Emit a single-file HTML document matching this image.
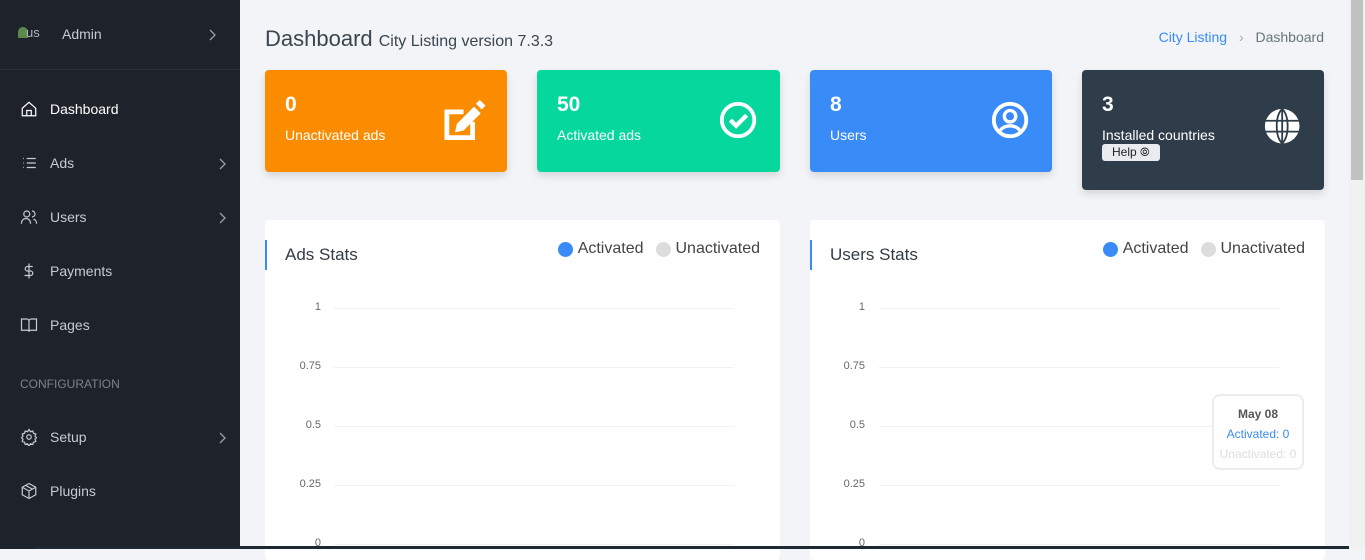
<!DOCTYPE html>
<html><head><meta charset="utf-8"><style>
*{box-sizing:border-box;margin:0;padding:0}
body{width:1365px;height:549px;overflow:hidden;background:#f2f4f8;font-family:"Liberation Sans",sans-serif;position:relative}
.sb{position:absolute;left:0;top:0;width:240px;height:549px;background:#1e222a;color:#c6cbd2}
.sb .top{height:70px;border-bottom:1px solid #2c323c;position:relative}
.item{position:absolute;left:20px;font-size:14px;display:flex;align-items:center}
.item svg{width:18px;height:18px;margin-right:12px;stroke:#c6cbd2;fill:none;stroke-width:1.6}
.chev{position:absolute;left:219px;width:8px;height:12px}
.card{position:absolute;top:70px;height:102px;width:242px;border-radius:4px;color:#fff;box-shadow:0 4px 8px rgba(0,0,0,.12)}
.card .n{position:absolute;left:20px;top:23px;font-size:21px;font-weight:bold}
.card .l{position:absolute;left:20px;top:57px;font-size:14px}
.card svg{position:absolute;right:20px;top:30px;width:44px;height:44px}
.panel{position:absolute;top:220px;width:515px;height:340px;background:#fff;border-radius:4px}
.panel .bar{position:absolute;left:0;top:20px;width:2px;height:30px;background:#398bf7}
.panel h3{position:absolute;left:20px;top:25px;font-weight:normal;font-size:17px;color:#333c44}
.leg{position:absolute;top:20px;right:20px;font-size:16px;color:#444;display:flex;align-items:center}
.dot{width:15px;height:15px;border-radius:50%;display:inline-block;margin-right:5px}
.yl{position:absolute;font-size:11px;color:#666;text-align:right;width:40px}
.gl{position:absolute;height:1px;background:#f1f1f1;width:400px}
</style></head><body>
<div class="sb">
 <div class="top">
  <div style="position:absolute;left:18px;top:25px;font-size:13px;color:#b0b5bc"><span style="display:inline-block;width:10px;height:11px;background:#5a8a4a;border-radius:6px 6px 0 0;vertical-align:-1px;margin-right:-2px"></span>us</div>
  <div style="position:absolute;left:62px;top:26px;font-size:14px;color:#c6cbd2">Admin</div>
  <svg class="chev" style="left:209px;top:29px" viewBox="0 0 8 12"><path d="M1 1l5 5-5 5" stroke="#9aa0a8" stroke-width="1.3" fill="none"/></svg>
 </div>
 <div class="item" style="top:100px;color:#fff"><svg viewBox="0 0 24 24" style="stroke:#fff"><path d="M3 11l9-8 9 8v10H3z M9 21v-7h6v7"/></svg>Dashboard</div>
 <div class="item" style="top:154px"><svg viewBox="0 0 24 24"><path d="M9 6h12M9 12h12M9 18h12M4 6h1M4 12h1M4 18h1"/></svg>Ads</div><svg class="chev" style="top:158px" viewBox="0 0 8 12"><path d="M1 1l5 5-5 5" stroke="#9aa0a8" stroke-width="1.3" fill="none"/></svg>
 <div class="item" style="top:208px"><svg viewBox="0 0 24 24"><circle cx="9" cy="8" r="4"/><path d="M2 21v-1a6 6 0 0112 0v1M16 4a4 4 0 010 8M18 15a5 5 0 014 5v1"/></svg>Users</div><svg class="chev" style="top:212px" viewBox="0 0 8 12"><path d="M1 1l5 5-5 5" stroke="#9aa0a8" stroke-width="1.3" fill="none"/></svg>
 <div class="item" style="top:262px"><svg viewBox="0 0 24 24"><path d="M12 2v20M17 6H10a3 3 0 000 6h4a3 3 0 010 6H6"/></svg>Payments</div>
 <div class="item" style="top:316px"><svg viewBox="0 0 24 24"><path d="M2 4h7a3 3 0 013 3v14a2 2 0 00-2-2H2zM22 4h-7a3 3 0 00-3 3v14a2 2 0 012-2h8z"/></svg>Pages</div>
 <div style="position:absolute;left:20px;top:377px;font-size:12px;color:#7c828a">CONFIGURATION</div>
 <div class="item" style="top:428px"><svg viewBox="0 0 24 24"><circle cx="12" cy="12" r="3"/><path d="M12 2l2 3 3-1 1 3 3 1-1 3 2 2-2 2 1 3-3 1-1 3-3-1-2 3-2-3-3 1-1-3-3-1 1-3-2-2 2-2-1-3 3-1 1-3 3 1z"/></svg>Setup</div><svg class="chev" style="top:432px" viewBox="0 0 8 12"><path d="M1 1l5 5-5 5" stroke="#9aa0a8" stroke-width="1.3" fill="none"/></svg>
 <div class="item" style="top:482px"><svg viewBox="0 0 24 24"><path d="M12 2l9 5v10l-9 5-9-5V7zM3 7l9 5 9-5M12 12v10M7.5 4.5l9 5"/></svg>Plugins</div>
</div>
<div style="position:absolute;left:265px;top:26px;font-size:22px;color:#3a4550">Dashboard <span style="font-size:16px">City Listing version 7.3.3</span></div>
<div style="position:absolute;right:41px;top:29px;font-size:14px;color:#67757c"><span style="color:#398bf7">City Listing</span> <span style="color:#aaa;margin:0 8px">&#x203A;</span> Dashboard</div>

<div class="card" style="left:265px;background:#fb8c00"><div class="n">0</div><div class="l">Unactivated ads</div>
<svg viewBox="0 0 44 44" style="width:47px;height:42px;top:29px;right:19px"><path d="M1 11h20v5H6v22h22V24h5v19H1z" fill="#fff"/><path d="M12 35l2-9 18-18 7 7-18 18z M34 5l4-4 6 6-4 4z" fill="#fff"/></svg></div>
<div class="card" style="left:537px;background:#06d79c;width:243px"><div class="n">50</div><div class="l">Activated ads</div>
<svg viewBox="0 0 44 44" style="width:42px;height:42px"><circle cx="21" cy="21" r="17" stroke="#fff" stroke-width="4" fill="none"/><path d="M13 21l6 6 11-11" stroke="#fff" stroke-width="4.5" fill="none"/></svg></div>
<div class="card" style="left:810px;background:#398bf7"><div class="n">8</div><div class="l">Users</div>
<svg viewBox="0 0 44 44" style="width:42px;height:42px"><circle cx="21" cy="21" r="17" stroke="#fff" stroke-width="4" fill="none"/><circle cx="21" cy="17" r="6" stroke="#fff" stroke-width="3.5" fill="none"/><path d="M10 33a12 10 0 0122 0" stroke="#fff" stroke-width="3.5" fill="none"/></svg></div>
<div class="card" style="left:1082px;background:#2f3c4a;height:120px"><div class="n">3</div><div class="l">Installed countries</div>
<div style="position:absolute;left:20px;top:74px;background:#e9ecef;color:#222;font-size:12px;padding:1px 10px;border-radius:3px">Help &#x29BE;</div>
<svg viewBox="0 0 44 44" style="width:40px;height:40px;top:38px"><circle cx="20" cy="20" r="19" fill="#fff"/><path d="M1 14h38M1 26h38M20 1v38M20 1c-8 8-8 30 0 38M20 1c8 8 8 30 0 38" stroke="#2f3c4a" stroke-width="2" fill="none"/></svg></div>

<div class="panel" style="left:265px"><div class="bar"></div><h3>Ads Stats</h3>
<div class="leg"><span class="dot" style="background:#398bf7"></span>Activated<span class="dot" style="background:#ddd;margin-left:12px"></span>Unactivated</div></div>
<div class="panel" style="left:810px"><div class="bar"></div><h3>Users Stats</h3>
<div class="leg"><span class="dot" style="background:#398bf7"></span>Activated<span class="dot" style="background:#ddd;margin-left:12px"></span>Unactivated</div></div>

<div class="yl" style="left:281px;top:301px">1</div><div class="yl" style="left:281px;top:360px">0.75</div><div class="yl" style="left:281px;top:419px">0.5</div><div class="yl" style="left:281px;top:478px">0.25</div><div class="yl" style="left:281px;top:537px">0</div>
<div class="gl" style="left:334px;top:308px"></div><div class="gl" style="left:334px;top:367px"></div><div class="gl" style="left:334px;top:426px"></div><div class="gl" style="left:334px;top:485px"></div><div class="gl" style="left:334px;top:544px"></div>
<div class="yl" style="left:825px;top:301px">1</div><div class="yl" style="left:825px;top:360px">0.75</div><div class="yl" style="left:825px;top:419px">0.5</div><div class="yl" style="left:825px;top:478px">0.25</div><div class="yl" style="left:825px;top:537px">0</div>
<div class="gl" style="left:879px;top:308px"></div><div class="gl" style="left:879px;top:367px"></div><div class="gl" style="left:879px;top:426px"></div><div class="gl" style="left:879px;top:485px"></div><div class="gl" style="left:879px;top:544px"></div>

<div style="position:absolute;left:1212px;top:394px;width:92px;height:76px;background:#fff;border:2px solid #ececec;border-radius:8px;text-align:center;font-size:12px;line-height:20px;padding-top:8px">
<div style="font-weight:bold;color:#555">May 08</div><div style="color:#398bf7">Activated: 0</div><div style="color:#ddd">Unactivated: 0</div></div>

<div style="position:absolute;left:1349px;top:0;width:16px;height:549px;background:#f1f1f1"></div>
<div style="position:absolute;left:1351px;top:0;width:12px;height:180px;background:#c1c1c1"></div>
<div style="position:absolute;left:35px;top:546px;width:1314px;height:3px;background:#1e2a33"></div>
</body></html>
